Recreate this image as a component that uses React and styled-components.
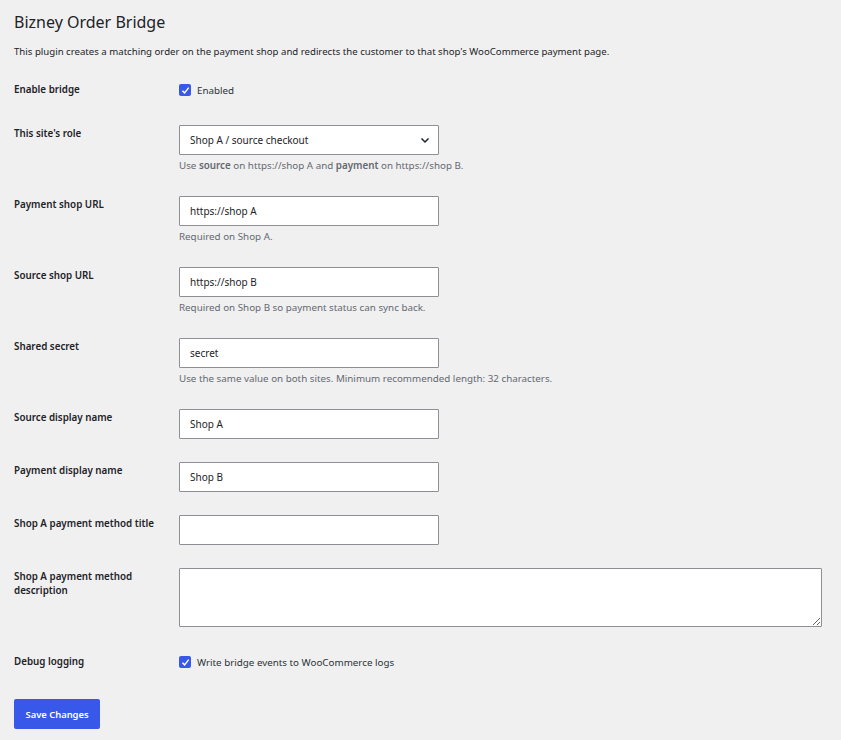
import React from 'react';
import styled, { createGlobalStyle } from 'styled-components';

const GlobalStyle = createGlobalStyle`
  html, body {
    margin: 0;
    padding: 0;
    background: #f0f0f1;
  }
  body {
    font-family: "Noto Sans", "Liberation Sans", sans-serif;
    color: #1d2327;
    font-size: 10px;
  }
`;

const Wrap = styled.div`
  padding: 11px 19px 10px 14px;
  width: 808px;
`;

const Title = styled.h1`
  margin: 0;
  font-size: 16px;
  font-weight: 400;
  line-height: 22px;
  color: #1d2327;
`;

const Intro = styled.p`
  margin: 12px 0 7.6px;
  font-size: 9.65px;
  line-height: 14px;
  color: #1d2327;
`;

const Row = styled.div`
  display: grid;
  grid-template-columns: 165px 1fr;
  padding: ${(p) => (p.$check ? '16px 0 16px' : '11px 0 12px')};
  align-items: ${(p) => (p.$check ? 'center' : 'start')};
`;

const Label = styled.label`
  font-size: 9.8px;
  font-weight: 600;
  line-height: 14px;
  padding-top: ${(p) => (p.$check ? '0' : '2px')};
  padding-right: 10px;
`;

const Field = styled.div`
  display: flex;
  flex-direction: column;
  align-items: flex-start;
`;

const TextInput = styled.input`
  box-sizing: border-box;
  width: 260px;
  height: 30px;
  margin: 0;
  padding: 0 10px;
  border: 1px solid #8c8f94;
  border-radius: 1px;
  background: #fff;
  font-family: inherit;
  font-size: 10px;
  color: #1d2327;
  outline: none;
`;

const SelectBox = styled.div`
  box-sizing: border-box;
  width: 260px;
  height: 30px;
  padding: 0 8px 0 10px;
  border: 1px solid #8c8f94;
  border-radius: 1px;
  background: #fff;
  display: flex;
  align-items: center;
  justify-content: space-between;
  font-size: 10px;
  color: #1d2327;
`;

const TextArea = styled.textarea`
  box-sizing: border-box;
  width: 100%;
  height: 59px;
  margin: 0;
  padding: 6px 10px;
  border: 1px solid #8c8f94;
  border-radius: 1px;
  background: #fff;
  font-family: inherit;
  font-size: 10px;
  outline: none;
`;

const Help = styled.p`
  margin: 4px 0 0;
  font-size: 9.8px;
  line-height: 14px;
  color: #646970;

  strong {
    font-weight: 600;
    color: #646970;
  }
`;

const CheckLabel = styled.label`
  display: flex;
  align-items: center;
  gap: 6px;
  font-size: 9.8px;
  line-height: 15px;
  color: #2c3338;
`;

const Box = styled.span`
  width: 12px;
  height: 12px;
  border-radius: 2px;
  background: #3858e9;
  display: flex;
  align-items: center;
  justify-content: center;
  flex: none;
`;

const Submit = styled.div`
  padding-top: 13.5px;
`;

const Button = styled.button`
  height: 30px;
  padding: 0 11.5px;
  border: none;
  border-radius: 2px;
  background: #3858e9;
  color: #fff;
  font-family: inherit;
  font-size: 9.4px;
  font-weight: 600;
  cursor: pointer;
`;

const Check = ({ children }) => (
  <CheckLabel>
    <Box>
      <svg width="9" height="9" viewBox="0 0 10 10">
        <path d="M1.6 5.2 L4 7.6 L8.6 1.8" fill="none" stroke="#fff" strokeWidth="1.6" />
      </svg>
    </Box>
    {children}
  </CheckLabel>
);

const Chevron = () => (
  <svg width="10" height="10" viewBox="0 0 10 10">
    <path d="M1.5 3.5 L5 7 L8.5 3.5" fill="none" stroke="#1d2327" strokeWidth="1.5" />
  </svg>
);

const inputs = [
  { label: 'Payment shop URL', value: 'https://shop A', help: 'Required on Shop A.' },
  { label: 'Source shop URL', value: 'https://shop B', help: 'Required on Shop B so payment status can sync back.' },
  { label: 'Shared secret', value: 'secret', help: 'Use the same value on both sites. Minimum recommended length: 32 characters.' },
  { label: 'Source display name', value: 'Shop A' },
  { label: 'Payment display name', value: 'Shop B' },
  { label: 'Shop A payment method title', value: '' },
];

export default function App() {
  return (
    <>
      <GlobalStyle />
      <Wrap>
        <Title>Bizney Order Bridge</Title>
        <Intro>
          This plugin creates a matching order on the payment shop and redirects the customer to that shop's WooCommerce payment page.
        </Intro>

        <Row $check>
          <Label $check>Enable bridge</Label>
          <Check>Enabled</Check>
        </Row>

        <Row>
          <Label>This site's role</Label>
          <Field>
            <SelectBox>
              <span>Shop A / source checkout</span>
              <Chevron />
            </SelectBox>
            <Help>
              Use <strong>source</strong> on https://shop A and <strong>payment</strong> on https://shop B.
            </Help>
          </Field>
        </Row>

        {inputs.map((f) => (
          <Row key={f.label}>
            <Label>{f.label}</Label>
            <Field>
              <TextInput defaultValue={f.value} />
              {f.help && <Help>{f.help}</Help>}
            </Field>
          </Row>
        ))}

        <Row>
          <Label>Shop A payment method description</Label>
          <Field>
            <TextArea />
          </Field>
        </Row>

        <Row $check>
          <Label $check>Debug logging</Label>
          <Check>Write bridge events to WooCommerce logs</Check>
        </Row>

        <Submit>
          <Button>Save Changes</Button>
        </Submit>
      </Wrap>
    </>
  );
}
